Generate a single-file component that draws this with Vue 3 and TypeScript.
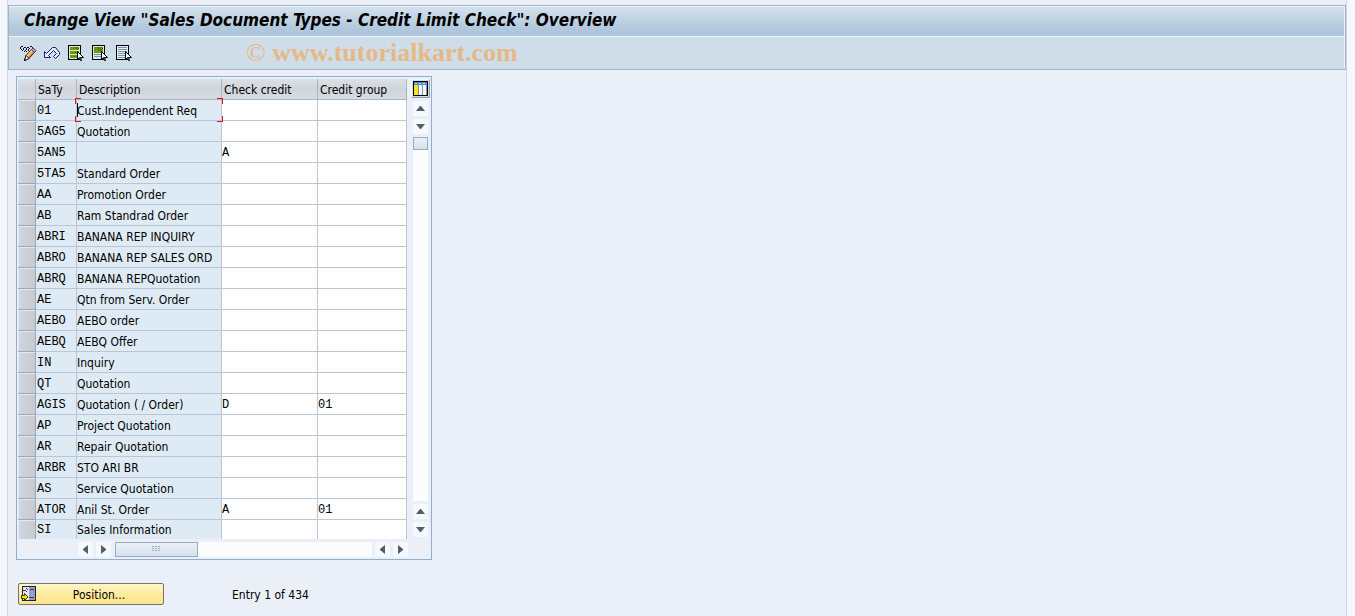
<script setup lang="ts">
import { reactive, ref } from 'vue'

interface Row {
  type: string
  description: string
  check: string
  group: string
}

const source: [string, string, string?, string?][] = [
  ['01', 'Cust.Independent Req'],
  ['5AG5', 'Quotation'],
  ['5AN5', '', 'A'],
  ['5TA5', 'Standard Order'],
  ['AA', 'Promotion Order'],
  ['AB', 'Ram Standrad Order'],
  ['ABRI', 'BANANA REP INQUIRY'],
  ['ABRO', 'BANANA REP SALES ORD'],
  ['ABRQ', 'BANANA REPQuotation'],
  ['AE', 'Qtn from Serv. Order'],
  ['AEBO', 'AEBO order'],
  ['AEBQ', 'AEBQ Offer'],
  ['IN', 'Inquiry'],
  ['QT', 'Quotation'],
  ['AGIS', 'Quotation ( / Order)', 'D', '01'],
  ['AP', 'Project Quotation'],
  ['AR', 'Repair Quotation'],
  ['ARBR', 'STO ARI BR'],
  ['AS', 'Service Quotation'],
  ['ATOR', 'Anil St. Order', 'A', '01'],
  ['SI', 'Sales Information'],
]

const rows = reactive<Row[]>(
  source.map(([type, description, check = '', group = '']) => ({ type, description, check, group })),
)
const current = ref(0)
</script>

<template>
  <main class="window">
    <header class="head">
      <h1 class="title">Change View "Sales Document Types - Credit Limit Check": Overview</h1>
      <div class="toolbar">
        <button class="tool" type="button" aria-label="Display or change">
          <svg width="17" height="17" viewBox="0 0 17 17">
            <path d="M4.500 15.500L6 10.500L12.500 3.500L15.500 6L9 13.500Z" fill="#ffb450" stroke="#222" />
            <path d="M8 13L14 6.500" stroke="#e2671c" />
            <path d="M7 11L12.500 5" stroke="#ffe9b0" />
            <path d="M11.500 4.500L13 3L16 5.500L14.500 7.500Z" fill="#b5b9e2" stroke="#44464e" />
            <path d="M4.500 15.500L6 10.500L9 13.500Z" fill="#fff" stroke="#222" />
            <path d="M4 16V14L6 15Z" fill="#000" />
            <path d="M1 1H3V2H1ZM0 2H1V4H0ZM1 4H2V5H1ZM3 3H4V5H3ZM2 5H3V6H2ZM4 2H6V3H4ZM6 3H7V5H6ZM5 5H6V6H5ZM4 6H5V7H4ZM7 2H9V3H7ZM9 3H10V4H9ZM8 4H9V6H8ZM6 6H7V7H6ZM10 1H12V2H10ZM12 2H13V3H12Z" fill="#111" shape-rendering="crispEdges" />
          </svg>
        </button>
        <button class="tool" type="button" aria-label="Undo">
          <svg width="17" height="17" viewBox="0 0 17 17">
            <path d="M0.500 6.500V12.500H6.500L4.500 10.500L9.500 5.500L12.500 8.500L9.500 11.500L11.500 13.500L15.500 9.500V7.500L11.500 2.500H8.500L2.500 8.500Z" fill="#e4ecf5" stroke="#15158a" />
          </svg>
        </button>
        <button class="tool" type="button" aria-label="Select all">
          <svg width="17" height="17" viewBox="0 0 17 17" shape-rendering="crispEdges">
            <path d="M0 0H13V15H0Z" fill="#000" />
            <path d="M1 1H12V14H1Z" fill="#dce8f0" />
            <path d="M2 2H11V5H2ZM2 6H11V9H2ZM2 10H11V13H2Z" fill="#6a9c00" />
            <path d="M7 2H8V3H7ZM9 2H10V3H9ZM8 3H9V4H8ZM10 3H11V4H10ZM7 7H8V8H7ZM6 11H7V12H6Z" fill="#3c6800" />
            <path d="M9.500 6.500V14.500L11.500 12.500L12.500 15.500H13.500L12.500 12.500H15.500Z" fill="#fff" stroke="#000" shape-rendering="auto" />
          </svg>
        </button>
        <button class="tool" type="button" aria-label="Select block">
          <svg width="17" height="17" viewBox="0 0 17 17" shape-rendering="crispEdges">
            <path d="M0 0H13V15H0Z" fill="#000" />
            <path d="M1 1H12V14H1Z" fill="#dce8f0" />
            <path d="M2 2H11V8H2Z" fill="#6a9c00" />
            <path d="M5 2H6V3H5ZM7 2H8V3H7ZM9 2H10V3H9ZM6 3H7V4H6ZM8 3H9V4H8ZM10 3H11V4H10ZM7 4H8V5H7ZM9 4H10V5H9ZM6 5H7V6H6ZM8 5H9V6H8Z" fill="#3c6800" />
            <path d="M2 9H10V10H2ZM2 11H10V12H2Z" fill="#7892a8" />
            <path d="M9.500 6.500V14.500L11.500 12.500L12.500 15.500H13.500L12.500 12.500H15.500Z" fill="#fff" stroke="#000" shape-rendering="auto" />
          </svg>
        </button>
        <button class="tool" type="button" aria-label="Deselect all">
          <svg width="17" height="17" viewBox="0 0 17 17" shape-rendering="crispEdges">
            <path d="M0 0H13V15H0Z" fill="#000" />
            <path d="M1 1H12V14H1Z" fill="#e4eef5" />
            <path d="M2 2H11V3H2ZM2 4H11V5H2ZM2 6H11V7H2ZM2 8H11V9H2ZM2 10H11V11H2ZM2 12H11V13H2Z" fill="#7892a8" />
            <path d="M9.500 6.500V14.500L11.500 12.500L12.500 15.500H13.500L12.500 12.500H15.500Z" fill="#fff" stroke="#000" shape-rendering="auto" />
          </svg>
        </button>
        <p class="mark"><span class="copy">©</span> www.tutorialkart.com</p>
      </div>
    </header>

    <section class="panel" aria-label="Sales document types">
      <table class="grid">
        <colgroup>
          <col class="w-sel" /><col class="w-type" /><col class="w-desc" /><col class="w-check" /><col class="w-group" />
        </colgroup>
        <thead>
          <tr>
            <th aria-label="Selection"></th>
            <th scope="col">SaTy</th>
            <th scope="col">Description</th>
            <th scope="col">Check credit</th>
            <th scope="col">Credit group</th>
          </tr>
        </thead>
        <tbody>
          <tr v-for="(row, i) in rows" :key="row.type">
            <td class="sel"><button type="button" :aria-label="`Select ${row.type}`" @click="current = i"></button></td>
            <td class="key code">{{ row.type }}</td>
            <td class="key" :class="{ active: i === current }">
              {{ row.description }}
              <span v-if="i === current" class="focus"><i></i><i></i><i></i><i></i></span>
            </td>
            <td><input v-model="row.check" class="code" type="text" :aria-label="`Check credit ${row.type}`" /></td>
            <td><input v-model="row.group" class="code" type="text" :aria-label="`Credit group ${row.type}`" /></td>
          </tr>
        </tbody>
      </table>

      <div class="vside">
        <button class="config" type="button" aria-label="Configuration">
          <svg width="15" height="15" viewBox="0 0 15 15" shape-rendering="crispEdges">
            <path d="M0 0H15V15H0Z" fill="#000" />
            <path d="M1 1H14V4H1Z" fill="#3f86dc" />
            <path d="M1 4H5V14H1Z" fill="#ffe21c" />
            <path d="M6 4H9V14H6ZM10 4H13V14H10Z" fill="#f4f8fc" />
            <path d="M5 2H6V14H5ZM9 2H10V14H9ZM13 2H14V14H13Z" fill="#8294a8" />
            <path d="M2 2H4V3H2ZM6 2H8V3H6ZM10 2H12V3H10Z" fill="#b9dcff" />
          </svg>
        </button>
        <button class="arrow" type="button" aria-label="Page up"><svg width="9" height="5" viewBox="0 0 9 5"><path d="M0 5L4 0H5L9 5Z" /></svg></button>
        <button class="arrow" type="button" aria-label="Line down"><svg width="9" height="5" viewBox="0 0 9 5"><path d="M0 0L4 5H5L9 0Z" /></svg></button>
        <div class="vtrack"><div class="vthumb"></div></div>
        <button class="arrow" type="button" aria-label="Line up"><svg width="9" height="5" viewBox="0 0 9 5"><path d="M0 5L4 0H5L9 5Z" /></svg></button>
        <button class="arrow" type="button" aria-label="Page down"><svg width="9" height="5" viewBox="0 0 9 5"><path d="M0 0L4 5H5L9 0Z" /></svg></button>
      </div>

      <div class="hside">
        <button class="arrow" type="button" aria-label="First column"><svg width="5" height="9" viewBox="0 0 5 9"><path d="M5 0L0 4V5L5 9Z" /></svg></button>
        <button class="arrow" type="button" aria-label="Column right"><svg width="5" height="9" viewBox="0 0 5 9"><path d="M0 0L5 4V5L0 9Z" /></svg></button>
        <div class="htrack">
          <div class="hthumb">
            <svg width="9" height="6" viewBox="0 0 9 6" shape-rendering="crispEdges">
              <path d="M0 0H2V1H0ZM3 0H5V1H3ZM6 0H8V1H6ZM0 2H2V3H0ZM3 2H5V3H3ZM6 2H8V3H6ZM0 4H2V5H0ZM3 4H5V5H3ZM6 4H8V5H6Z" fill="#a3b0bf" />
            </svg>
          </div>
        </div>
        <button class="arrow" type="button" aria-label="Column left"><svg width="5" height="9" viewBox="0 0 5 9"><path d="M5 0L0 4V5L5 9Z" /></svg></button>
        <button class="arrow" type="button" aria-label="Last column"><svg width="5" height="9" viewBox="0 0 5 9"><path d="M0 0L5 4V5L0 9Z" /></svg></button>
      </div>
    </section>

    <footer class="foot">
      <button class="position" type="button">
        <svg width="16" height="16" viewBox="0 0 16 16" shape-rendering="crispEdges">
          <path d="M1 0H15V15H1Z" fill="#222" />
          <path d="M2 1H14V14H2Z" fill="#e4e8f4" />
          <path d="M8 1H14V14H8Z" fill="#9a9cc8" />
          <path d="M2 4H5V5H2ZM5 2H6V3H5ZM6 3H7V4H6ZM5 5H6V6H5ZM9 3H13V4H9ZM8 11H13V12H8Z" fill="#333a66" />
          <path d="M0.500 9.500H3.500V7.500L7 11L3.500 14.500V12.500H0.500Z" fill="#ffe600" stroke="#3a3600" shape-rendering="auto" />
        </svg>
        <span>Position...</span>
      </button>
      <p class="entry">Entry 1 of 434</p>
    </footer>
  </main>
</template>

<style>
body {
  background: #f4f7fc;
}
</style>

<style scoped>
.window {
  box-sizing: border-box;
  min-height: 100vh;
  margin: 0 8px 0 7px;
  padding-top: 5px;
  border: solid #cfd7e4;
  border-width: 0 1px;
  background: #ebf0f8;
  color: #000;
  font: 12px/18px "DejaVu Sans Condensed", "Noto Sans", sans-serif;
}
button {
  display: flex;
  align-items: center;
  justify-content: center;
  margin: 0;
  padding: 0;
  border: 0;
  background: none;
  font: inherit;
  color: inherit;
}
p {
  margin: 0;
}
.head {
  border: 1px solid #a2b3c8;
}
.title {
  margin: 0;
  padding: 0 15px 3px;
  border: 1px solid #eef4f9;
  border-left: 0;
  background: linear-gradient(#d3e1ee, #bdd1e0 50%, #b0c7dd 75%, #afc5df);
  font-size: 17px;
  font-weight: bold;
  font-style: italic;
  line-height: 26px;
  white-space: nowrap;
}
.toolbar {
  display: flex;
  align-items: center;
  gap: 7px;
  height: 32px;
  padding-left: 11px;
  border-right: 1px solid #eef4f9;
  background: #cfdde8;
}
.tool {
  width: 17px;
  height: 17px;
}
.mark {
  margin-left: 106px;
  color: #e5b887;
  font: bold 26px/30px "Liberation Serif", serif;
  white-space: nowrap;
}
.copy {
  font-weight: normal;
}
.panel {
  display: grid;
  grid-template-columns: max-content 24px;
  grid-template-rows: auto 20px;
  width: max-content;
  margin: 6px 0 0 8px;
  padding: 2px 0 0 1px;
  border: 1px solid #91afcc;
}
.grid {
  width: 389px;
  table-layout: fixed;
  border-spacing: 0;
}
.w-sel { width: 18px; }
.w-type { width: 41px; }
.w-desc { width: 145px; }
.w-check { width: 96px; }
.w-group { width: 89px; }
th {
  height: 18px;
  padding: 2px 0 0 2px;
  border-right: 1px solid #aab5c4;
  border-bottom: 1px solid #aab5c4;
  background: linear-gradient(#dde1e6, #cfd5dc 50%, #d8dce2);
  font-weight: normal;
  text-align: left;
  white-space: nowrap;
}
td {
  height: 20px;
  padding: 0;
  border-right: 1px solid #bac6d6;
  border-bottom: 1px solid #bac6d6;
  background: #fff;
  white-space: nowrap;
}
.key {
  height: 18px;
  padding-top: 2px;
  background: #deebf5;
}
.code {
  font-family: "Liberation Mono", monospace;
}
.key.code {
  padding-left: 1px;
}
.active {
  position: relative;
  z-index: 1;
}
tbody tr:last-child td {
  height: 19px;
  border-bottom: 0;
}
tbody tr:last-child .key {
  height: 17px;
  line-height: 17px;
}
.sel {
  border-color: #9aa7b8;
}
.sel button {
  width: 100%;
  height: 20px;
  border: solid #e6e9ee;
  border-width: 1px 0 0 1px;
  background: linear-gradient(90deg, #d2d6dc, #c5cad1);
}
input {
  display: block;
  box-sizing: border-box;
  width: 100%;
  height: 20px;
  padding: 2px 0 0;
  border: 0;
  outline: 0;
  background: none;
  font-size: 12px;
  color: #000;
}
tbody tr:last-child button,
tbody tr:last-child input {
  height: 19px;
}
.focus {
  position: absolute;
  inset: -2px;
  pointer-events: none;
}
.focus i {
  position: absolute;
  width: 5px;
  height: 5px;
  border: 0 solid #e01020;
}
.focus i:nth-child(1) { left: 0; top: 0; border-width: 1px 0 0 1px; }
.focus i:nth-child(2) { right: 0; top: 0; border-width: 1px 1px 0 0; }
.focus i:nth-child(3) { left: 0; bottom: 0; border-width: 0 0 1px 1px; }
.focus i:nth-child(4) { right: 0; bottom: 0; border-width: 0 1px 1px 0; }
.focus::before {
  content: "";
  position: absolute;
  left: 2px;
  top: 5px;
  bottom: 5px;
  width: 1px;
  background: #000;
}
.vside {
  display: flex;
  flex-direction: column;
  align-items: center;
  gap: 3px;
  padding: 0 0 2px 2px;
}
.config {
  box-sizing: border-box;
  width: 19px;
  height: 19px;
  border: 1px solid #f4f7fa;
  border-right-color: #8f9cab;
  border-bottom-color: #8f9cab;
  background: #d5dbe2;
}
.arrow {
  flex: none;
  width: 15px;
  height: 15px;
  background: #f6f8fb;
}
.arrow path {
  fill: #4c6070;
}
.vtrack {
  flex: 1;
  width: 15px;
  background: #fafcfd;
}
.vthumb,
.hthumb {
  box-sizing: border-box;
  border: 1px solid #9baabc;
  background: linear-gradient(#e9f0f7, #d6e1ed);
}
.vthumb {
  height: 13px;
}
.hside {
  grid-column: 1 / 3;
  display: flex;
  align-items: center;
  gap: 3px;
  padding: 0 23px 0 60px;
}
.htrack {
  flex: 1;
  height: 15px;
  margin-left: 1px;
  background: #fafcfd;
}
.hthumb {
  display: flex;
  align-items: center;
  justify-content: center;
  width: 83px;
  height: 15px;
}
.foot {
  display: flex;
  align-items: center;
  gap: 68px;
  margin: 23px 0 0 10px;
}
.position {
  box-sizing: border-box;
  width: 146px;
  height: 22px;
  padding-left: 2px;
  border: 1px solid #77756a;
  border-radius: 2px;
  background: linear-gradient(#fff6cc, #ffeb9c 50%, #fbe48e);
}
.position span {
  flex: 1;
  padding: 2px 2px 0 0;
}
.entry {
  padding-top: 2px;
}
</style>
